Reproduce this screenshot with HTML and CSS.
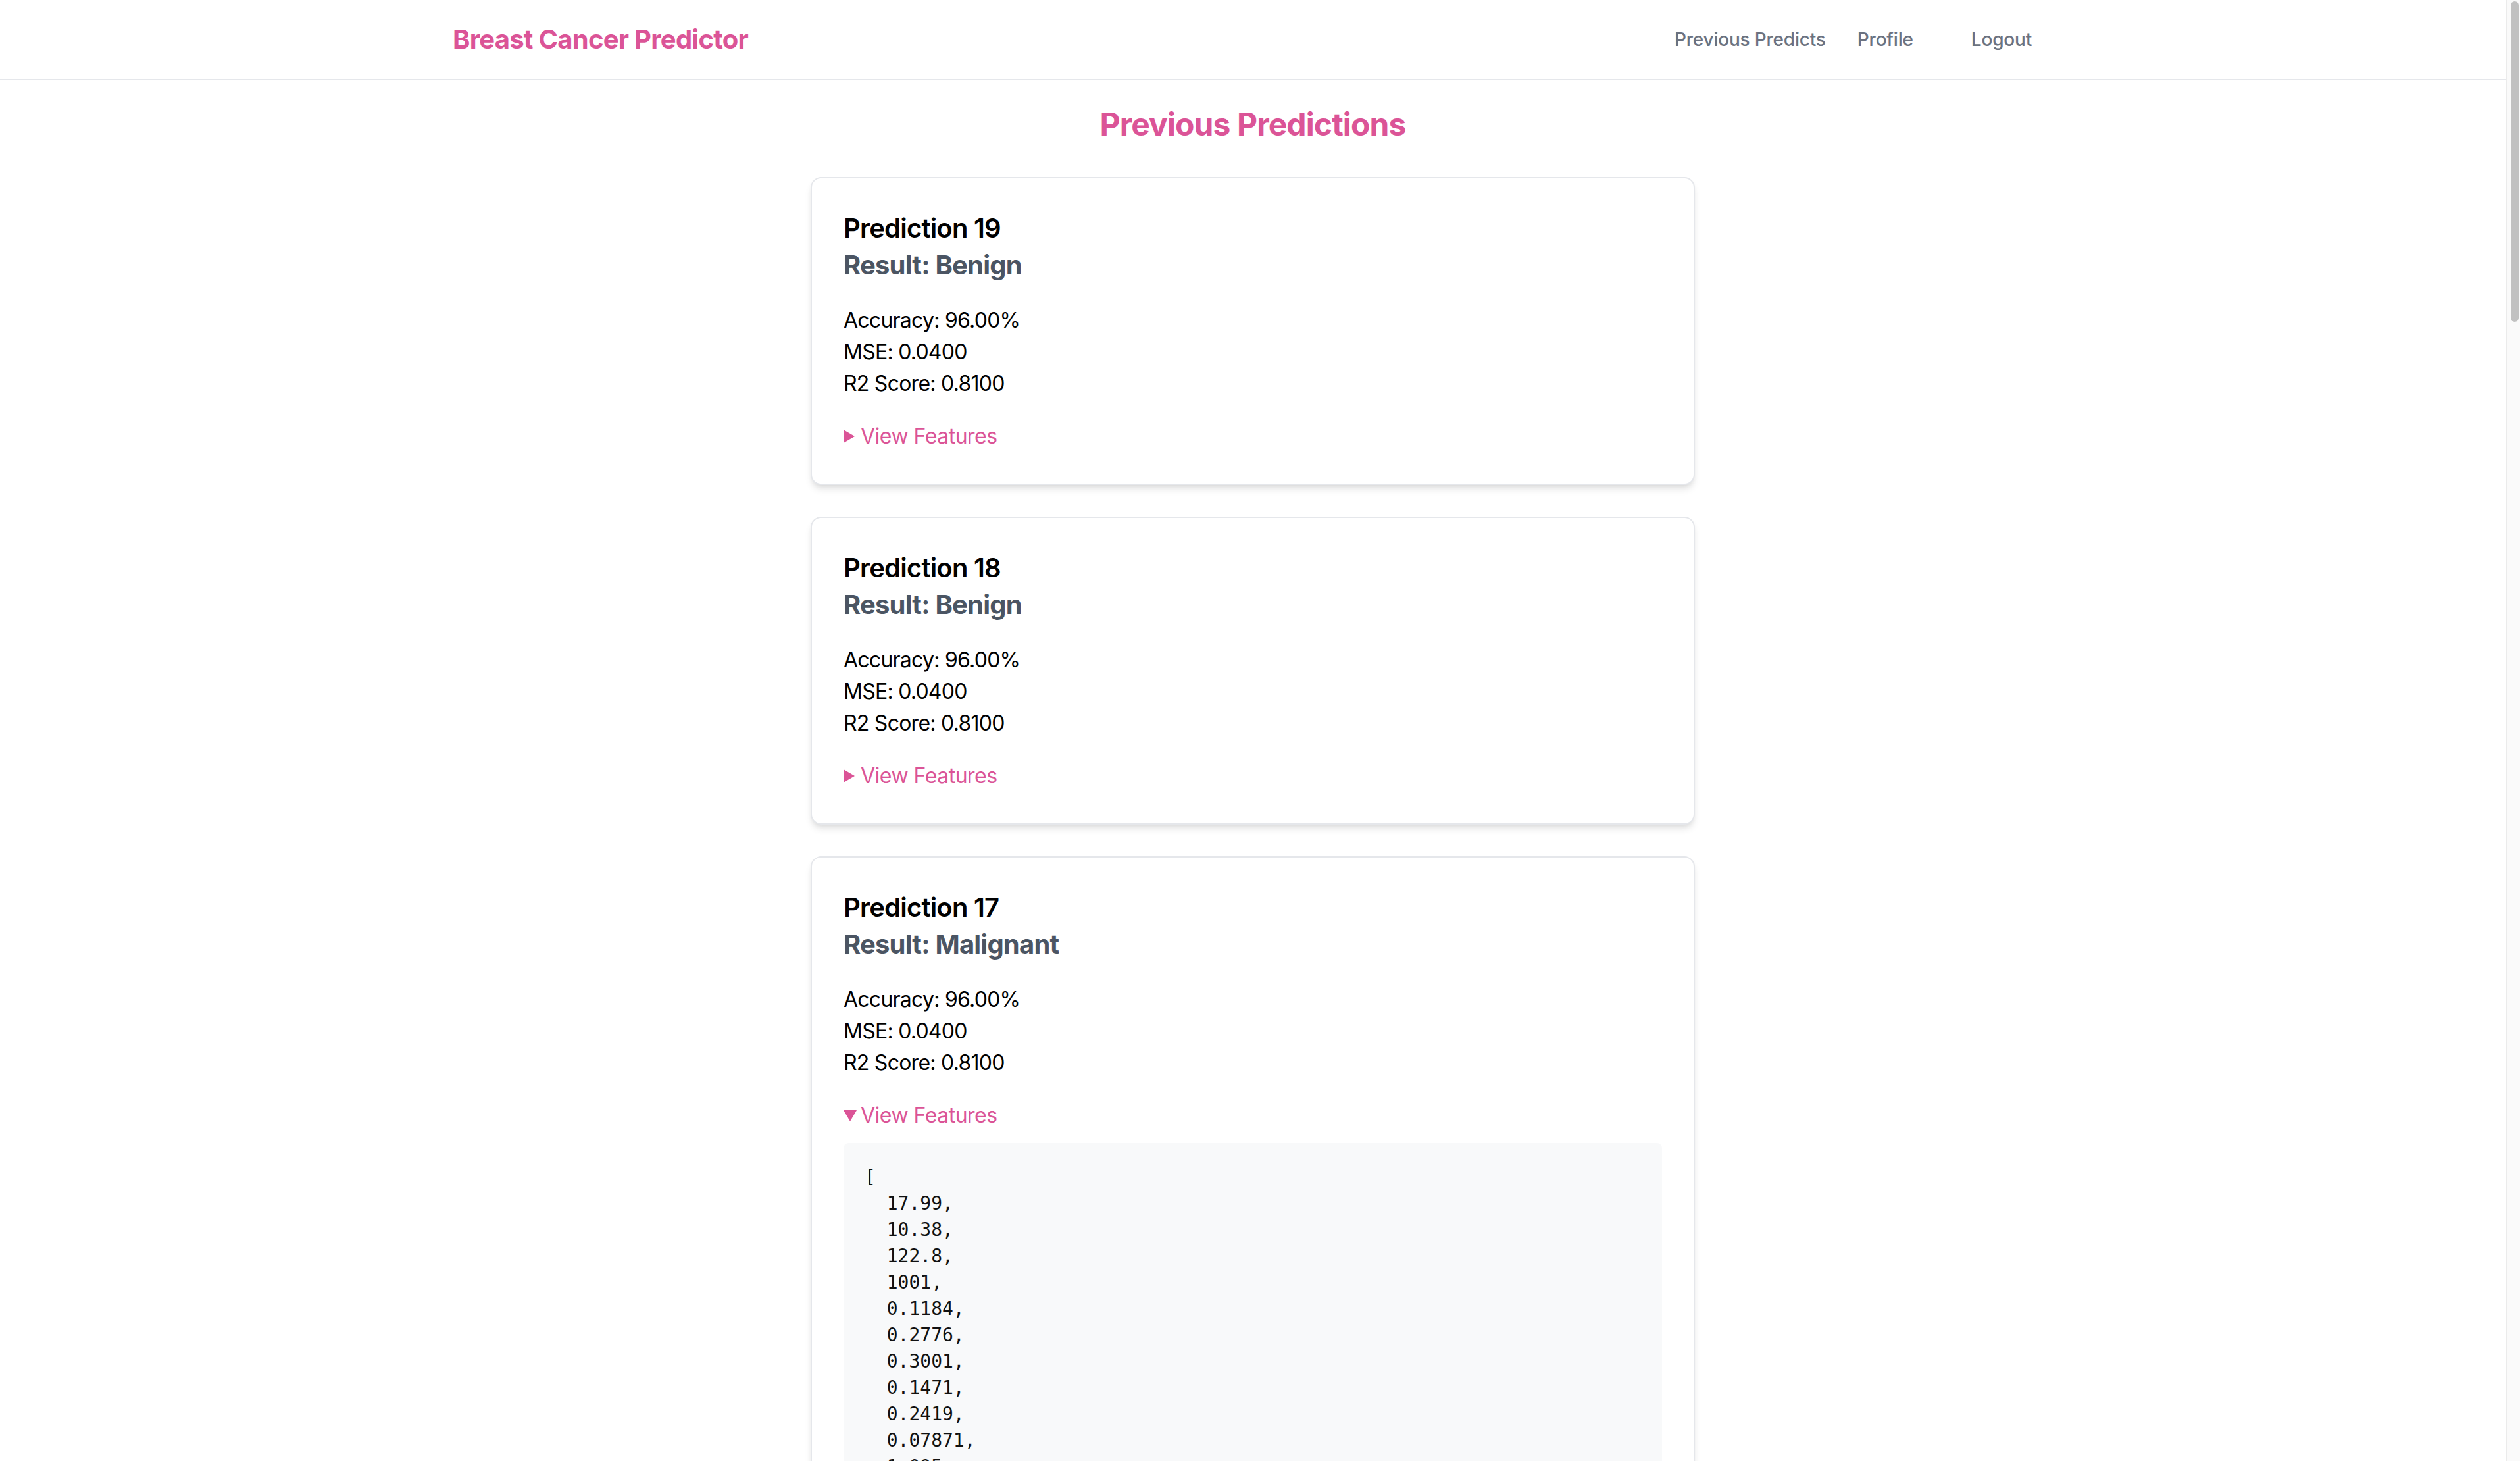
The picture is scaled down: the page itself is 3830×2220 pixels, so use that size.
FILE: index.html
```html
<!DOCTYPE html>
<html lang="en">
<head>
<meta charset="utf-8">
<title>Previous Predictions - Breast Cancer Predictor</title>
<link rel="stylesheet" href="styles.css">
</head>
<body>
<div class="page">
  <header class="navbar">
    <div class="nav-inner">
      <a class="brand" href="#">Breast Cancer Predictor</a>
      <nav class="nav-links">
        <a class="nav-link" href="#">Previous Predicts</a>
        <a class="nav-link" href="#">Profile</a>
        <button class="nav-button" type="button">Logout</button>
      </nav>
    </div>
  </header>

  <main class="main">
    <h1 class="page-title">Previous Predictions</h1>

    <section class="card">
      <h2 class="card-title">Prediction 19</h2>
      <h3 class="card-result">Result: Benign</h3>
      <div class="metrics">
        <p>Accuracy: 96.00%</p>
        <p>MSE: 0.0400</p>
        <p>R2 Score: 0.8100</p>
      </div>
      <details class="features">
        <summary>View Features</summary>
        <pre class="features-code">[
  17.99,
  10.38
]</pre>
      </details>
    </section>

    <section class="card">
      <h2 class="card-title">Prediction 18</h2>
      <h3 class="card-result">Result: Benign</h3>
      <div class="metrics">
        <p>Accuracy: 96.00%</p>
        <p>MSE: 0.0400</p>
        <p>R2 Score: 0.8100</p>
      </div>
      <details class="features">
        <summary>View Features</summary>
        <pre class="features-code">[
  17.99,
  10.38
]</pre>
      </details>
    </section>

    <section class="card">
      <h2 class="card-title">Prediction 17</h2>
      <h3 class="card-result">Result: Malignant</h3>
      <div class="metrics">
        <p>Accuracy: 96.00%</p>
        <p>MSE: 0.0400</p>
        <p>R2 Score: 0.8100</p>
      </div>
      <details class="features" open>
        <summary>View Features</summary>
        <pre class="features-code">[
  17.99,
  10.38,
  122.8,
  1001,
  0.1184,
  0.2776,
  0.3001,
  0.1471,
  0.2419,
  0.07871,
  1.095,
  0.9053,
  8.589,
  153.4,
  0.006399,
  0.04904,
  0.05373,
  0.01587,
  0.03003,
  0.006193,
  25.38,
  17.33,
  184.6,
  2019,
  0.1622,
  0.6656,
  0.7119,
  0.2654,
  0.4601,
  0.1189
]</pre>
      </details>
    </section>

    <section class="card">
      <h2 class="card-title">Prediction 16</h2>
      <h3 class="card-result">Result: Benign</h3>
      <div class="metrics">
        <p>Accuracy: 96.00%</p>
        <p>MSE: 0.0400</p>
        <p>R2 Score: 0.8100</p>
      </div>
      <details class="features">
        <summary>View Features</summary>
        <pre class="features-code">[]</pre>
      </details>
    </section>
  </main>
</div>
<div class="scrollbar" aria-hidden="true"><div class="scrollbar-thumb"></div></div>
</body>
</html>
```

FILE: styles.css
```css
html, body {
  margin: 0;
  padding: 0;
  height: 100%;
  overflow: hidden;
  background: #ffffff;
}

body {
  font-family: Inter, "Noto Sans", "Liberation Sans", sans-serif;
  color: #000000;
}

.page {
  width: calc(100% - 22px);
  height: 100%;
}

.navbar {
  border-bottom: 2px solid #e5e7eb;
  background: #ffffff;
}

.nav-inner {
  max-width: 2560px;
  margin: 0 auto;
  padding: 0 64px;
  height: 120px;
  display: flex;
  align-items: center;
  justify-content: space-between;
  box-sizing: border-box;
}

.brand {
  font-size: 40px;
  line-height: 56px;
  font-weight: 700;
  color: #db5497;
  text-decoration: none;
  letter-spacing: -0.75px;
}

.nav-links {
  display: flex;
  align-items: center;
}

.nav-link,
.nav-button {
  font-family: inherit;
  font-size: 28px;
  line-height: 40px;
  font-weight: 500;
  color: #6b7280;
  text-decoration: none;
  letter-spacing: -0.2px;
}

.nav-link + .nav-link {
  margin-left: 48px;
}

.nav-button {
  background: transparent;
  border: 0;
  padding: 0 32px;
  margin-left: 56px;
  cursor: pointer;
}

.main {
  padding-top: 35px;
}

.page-title {
  margin: 0 0 48px;
  text-align: center;
  font-size: 48px;
  line-height: 64px;
  font-weight: 700;
  color: #db5497;
  letter-spacing: -0.9px;
}

.card {
  width: 1344px;
  box-sizing: border-box;
  margin: 0 auto 48px;
  padding: 48px;
  background: #ffffff;
  border: 2px solid #e5e7eb;
  border-radius: 16px;
  box-shadow: 0 8px 12px -2px rgba(0, 0, 0, 0.1), 0 4px 8px -4px rgba(0, 0, 0, 0.1);
}

.card-title {
  margin: 0;
  font-size: 40px;
  line-height: 56px;
  font-weight: 600;
  color: #000000;
  letter-spacing: -0.8px;
}

.card-result {
  margin: 0;
  font-size: 40px;
  line-height: 56px;
  font-weight: 700;
  color: #4b5563;
  letter-spacing: -0.8px;
}

.metrics {
  margin-top: 32px;
}

.metrics p {
  margin: 0;
  font-size: 32px;
  line-height: 48px;
  letter-spacing: -0.75px;
}

.features {
  margin-top: 32px;
}

.features summary {
  list-style: none;
  display: flex;
  align-items: center;
  font-size: 32px;
  line-height: 48px;
  color: #db5497;
  letter-spacing: -0.5px;
  cursor: pointer;
}

.features summary::-webkit-details-marker {
  display: none;
}

.features summary::before {
  content: "";
  width: 0;
  height: 0;
  margin-right: 9px;
  border-left: 17px solid #db5497;
  border-top: 10px solid transparent;
  border-bottom: 10px solid transparent;
}

.features[open] summary::before {
  border-left: 10px solid transparent;
  border-right: 10px solid transparent;
  border-top: 17px solid #db5497;
  border-bottom: 0;
  margin-right: 6px;
}

.features-code {
  margin: 18px 0 0;
  padding: 32px;
  background: #f8f9fa;
  border-radius: 8px;
  font-family: "DejaVu Sans Mono", "Liberation Mono", monospace;
  font-size: 28px;
  line-height: 40px;
  color: #111111;
}

.scrollbar {
  position: fixed;
  top: 0;
  right: 0;
  width: 22px;
  height: 100%;
  box-sizing: border-box;
  background: #fafafa;
  border-left: 2px solid #ebebeb;
}

.scrollbar-thumb {
  margin: 2px 0 0 6px;
  width: 12px;
  height: 487px;
  border-radius: 6px;
  background: #c1c1c1;
}
```
